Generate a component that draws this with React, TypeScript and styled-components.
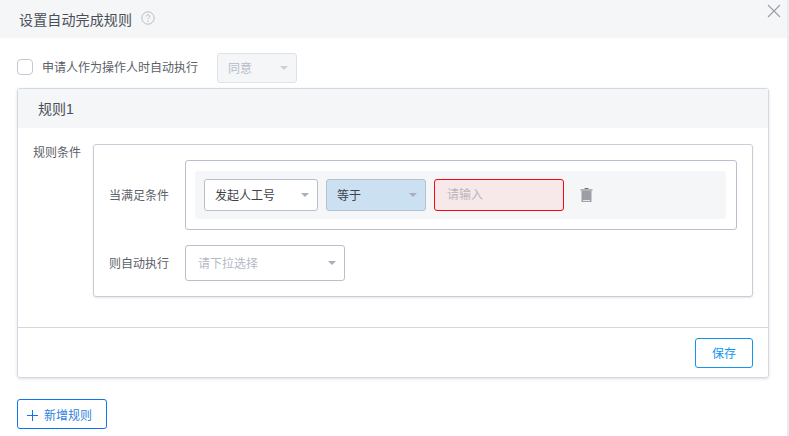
import React from 'react'
import styled, { createGlobalStyle } from 'styled-components'

const GlobalStyle = createGlobalStyle`
  html, body {
    margin: 0;
    padding: 0;
    background: #fff;
    overflow: hidden;
    font-family: "Liberation Sans", "Noto Sans CJK SC", sans-serif;
  }
`

const Page = styled.div`
  width: 789px;
  height: 436px;
  display: flex;
  background: #e9ebef;
  overflow: hidden;
`

const Modal = styled.div`
  position: relative;
  width: 787px;
  height: 436px;
  background: #fff;
`

const Header = styled.div`
  height: 38px;
  background: #f5f6f8;
  display: flex;
  align-items: center;
  padding-left: 19px;
  box-sizing: border-box;
`

const Title = styled.span`
  font-size: 14px;
  color: #4a4f57;
  letter-spacing: 0.01em;
`

const HelpIcon = styled.svg`
  width: 14px;
  height: 14px;
  margin-left: 9px;
  margin-top: -3px;
`

const CloseButton = styled.svg`
  position: absolute;
  top: 4px;
  right: 6px;
  width: 14px;
  height: 14px;
`

const AutoRow = styled.div`
  display: flex;
  align-items: center;
  height: 30px;
  margin-top: 15px;
  padding-left: 17px;
`

const Checkbox = styled.span`
  box-sizing: border-box;
  width: 16px;
  height: 16px;
  border: 1px solid #c3c8d3;
  border-radius: 4px;
  background: #fff;
  margin-top: -2px;
  flex: none;
`

const AutoLabel = styled.span`
  font-size: 12px;
  color: #5c6068;
  margin-left: 9px;
  margin-top: -4px;
  width: 175px;
`

const Select = styled.div<{ $width: number; $height: number; $tone?: 'disabled' | 'blue' | 'plain' }>`
  position: relative;
  box-sizing: border-box;
  width: ${p => p.$width}px;
  height: ${p => p.$height}px;
  display: flex;
  align-items: center;
  font-size: 12px;
  border-radius: 3px;
  border: 1px solid ${p => (p.$tone === 'disabled' ? '#dfe2e8' : '#b9bfcc')};
  background: ${p => (p.$tone === 'disabled' ? '#f5f6f8' : p.$tone === 'blue' ? '#cbe0f1' : '#fff')};
  flex: none;

  &:after {
    content: "";
    position: absolute;
    right: 8px;
    top: 50%;
    margin-top: -2px;
    border-left: 4px solid transparent;
    border-right: 4px solid transparent;
    border-top: 4px solid ${p => (p.$tone === 'disabled' ? '#ccd0d8' : '#a8aebb')};
  }
`

const SelectText = styled.span<{ $muted?: boolean; $left: number }>`
  padding-left: ${p => p.$left}px;
  padding-bottom: 2px;
  color: ${p => (p.$muted ? '#b4bac6' : '#3d4249')};
`

const RuleCard = styled.div`
  box-sizing: border-box;
  width: 752px;
  height: 290px;
  margin: 5px 0 0 17px;
  border: 1px solid #d5d8e0;
  border-radius: 3px;
  box-shadow: 0 1px 3px rgba(120, 130, 150, 0.25);
  display: flex;
  flex-direction: column;
`

const RuleHead = styled.div`
  height: 39px;
  background: #f5f6f8;
  display: flex;
  align-items: center;
  padding: 0 0 2px 20px;
  box-sizing: border-box;
  font-size: 14px;
  color: #4a4f57;
  flex: none;
`

const RuleBody = styled.div`
  flex: 1;
  display: flex;
  padding: 16px 15px 0 15px;
`

const SideLabel = styled.div`
  width: 60px;
  font-size: 12px;
  color: #5c6068;
  line-height: 18px;
  flex: none;
`

const Panel = styled.div`
  box-sizing: border-box;
  width: 660px;
  height: 153px;
  border: 1px solid #c9cdd8;
  border-radius: 3px;
  box-shadow: 0 1px 2px rgba(120, 130, 150, 0.2);
  padding: 15px 15px 0 15px;
`

const PanelRow = styled.div<{ $gap?: number }>`
  display: flex;
  align-items: center;
  margin-top: ${p => p.$gap ?? 0}px;
`

const RowLabel = styled.span`
  width: 76px;
  font-size: 12px;
  color: #5c6068;
  padding-bottom: 2px;
  flex: none;
`

const ConditionBox = styled.div`
  box-sizing: border-box;
  width: 552px;
  height: 70px;
  border: 1px solid #b9bfcc;
  border-radius: 3px;
  padding: 10px 0 0 9px;
`

const ConditionInner = styled.div`
  height: 48px;
  width: 531px;
  background: #f5f6f8;
  border-radius: 3px;
  display: flex;
  align-items: center;
  gap: 8px;
  padding-left: 9px;
  box-sizing: border-box;
`

const ErrorInput = styled.div`
  box-sizing: border-box;
  width: 130px;
  height: 32px;
  border: 1px solid #fa0510;
  border-radius: 3px;
  background: #f7e8e9;
  display: flex;
  align-items: center;
  padding: 0 0 3px 12px;
  font-size: 12px;
  color: #b9b6c0;
`

const TrashIcon = styled.svg`
  width: 13px;
  height: 14px;
  margin-left: 8px;
  margin-top: -1px;
  flex: none;
`

const RuleFoot = styled.div`
  box-sizing: border-box;
  height: 50px;
  border-top: 1px solid #d5d6d9;
  display: flex;
  justify-content: flex-end;
  align-items: center;
  padding-right: 15px;
  flex: none;
`

const SaveButton = styled.button`
  box-sizing: border-box;
  width: 58px;
  height: 30px;
  border: 1px solid #1296ee;
  border-radius: 3px;
  background: #fff;
  color: #1296ee;
  font: inherit;
  font-size: 12px;
  padding: 0;
`

const AddButton = styled.button`
  box-sizing: border-box;
  width: 90px;
  height: 30px;
  margin: 21px 0 0 17px;
  border: 1px solid #0f74f0;
  border-radius: 3px;
  background: #fff;
  color: #2f7fe0;
  font: inherit;
  font-size: 12px;
  display: flex;
  align-items: center;
  padding: 0 0 0 9px;
  gap: 6px;
`

const PlusIcon = styled.svg`
  width: 11px;
  height: 11px;
  margin-top: 2px;
`

export default function App() {
  return (
    <Page>
      <GlobalStyle />
      <Modal>
        <Header>
          <Title>设置自动完成规则</Title>
          <HelpIcon viewBox="0 0 14 14" fill="none">
            <circle cx="7" cy="7" r="6.2" stroke="#b8bcc5" />
            <path d="M5.3 5.5a1.7 1.7 0 1 1 2.6 1.4c-.6.4-.9.7-.9 1.4" stroke="#b8bcc5" />
            <circle cx="7" cy="10.2" r=".7" fill="#b8bcc5" />
          </HelpIcon>
        </Header>
        <CloseButton viewBox="0 0 14 14" fill="none">
          <path d="M1 1l12 12M13 1L1 13" stroke="#9a9ea6" strokeWidth="1.1" />
        </CloseButton>

        <AutoRow>
          <Checkbox />
          <AutoLabel>申请人作为操作人时自动执行</AutoLabel>
          <Select $width={80} $height={30} $tone="disabled">
            <SelectText $muted $left={10}>同意</SelectText>
          </Select>
        </AutoRow>

        <RuleCard>
          <RuleHead>规则1</RuleHead>
          <RuleBody>
            <SideLabel>规则条件</SideLabel>
            <Panel>
              <PanelRow>
                <RowLabel>当满足条件</RowLabel>
                <ConditionBox>
                  <ConditionInner>
                    <Select $width={114} $height={32}>
                      <SelectText $left={10}>发起人工号</SelectText>
                    </Select>
                    <Select $width={100} $height={32} $tone="blue">
                      <SelectText $left={10}>等于</SelectText>
                    </Select>
                    <ErrorInput>请输入</ErrorInput>
                    <TrashIcon viewBox="0 0 13 14">
                      <path d="M4.5 0.5h4M0.5 2h12" stroke="#6f7277" strokeWidth="1" fill="none" />
                      <path d="M1.5 3h10v11h-10z" fill="#9b9ea3" />
                      <path d="M3 12.2h7v.9H3z" fill="#f5f6f8" />
                    </TrashIcon>
                  </ConditionInner>
                </ConditionBox>
              </PanelRow>
              <PanelRow $gap={15}>
                <RowLabel>则自动执行</RowLabel>
                <Select $width={160} $height={36}>
                  <SelectText $muted $left={12}>请下拉选择</SelectText>
                </Select>
              </PanelRow>
            </Panel>
          </RuleBody>
          <RuleFoot>
            <SaveButton>保存</SaveButton>
          </RuleFoot>
        </RuleCard>

        <AddButton>
          <PlusIcon viewBox="0 0 11 11">
            <path d="M5 0h1v5h5v1H6v5H5V6H0V5h5z" fill="#0f74f0" />
          </PlusIcon>
          新增规则
        </AddButton>
      </Modal>
    </Page>
  )
}
